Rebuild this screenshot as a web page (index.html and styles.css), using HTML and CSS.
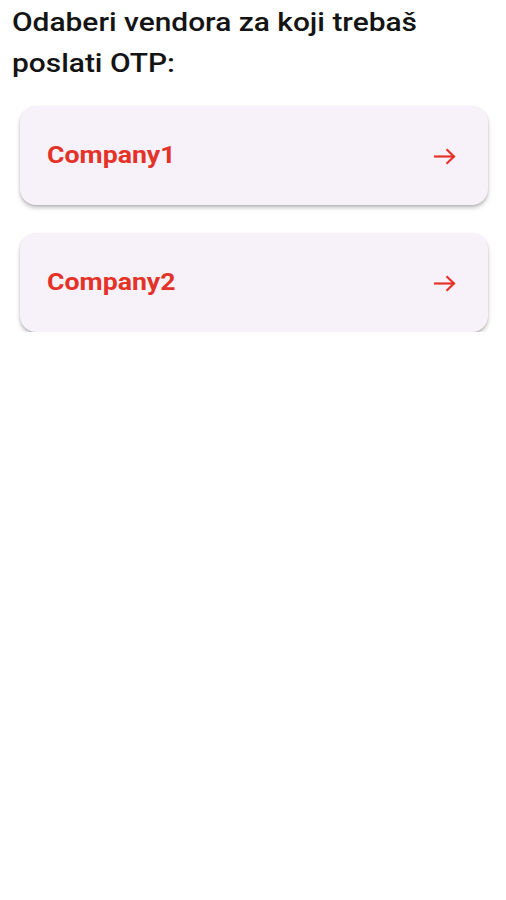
FILE: index.html
```html
<!DOCTYPE html>
<html lang="hr">
<head>
<meta charset="utf-8">
<link rel="stylesheet" href="styles.css">
</head>
<body>
<main class="page">
  <h1 class="title">Odaberi vendora za koji trebaš poslati OTP:</h1>
  <ul class="vendors">
    <li class="vendor">
      <span class="vendor-name">Company1</span>
      <svg class="arrow" width="23" height="17" viewBox="0 0 23 17" fill="none" stroke="#e53229" stroke-width="2.2" stroke-linecap="butt" stroke-linejoin="miter">
        <path d="M1 8.5H21"/>
        <path d="M13.5 1.3L21 8.5L13.5 15.7"/>
      </svg>
    </li>
    <li class="vendor">
      <span class="vendor-name">Company2</span>
      <svg class="arrow" width="23" height="17" viewBox="0 0 23 17" fill="none" stroke="#e53229" stroke-width="2.2" stroke-linecap="butt" stroke-linejoin="miter">
        <path d="M1 8.5H21"/>
        <path d="M13.5 1.3L21 8.5L13.5 15.7"/>
      </svg>
    </li>
  </ul>
</main>
</body>
</html>
```
FILE: styles.css
```css
html, body {
  margin: 0;
  padding: 0;
  background: #ffffff;
}
body {
  font-family: Roboto, "Liberation Sans", sans-serif;
  width: 506px;
}
.page {
  padding: 2px 18px 0 12px;
}
.title {
  margin: 0;
  width: 380px;
  font-size: 26px;
  font-weight: 500;
  line-height: 41px;
  color: #141414;
  transform: scaleX(1.15);
  transform-origin: left top;
}
.vendors {
  list-style: none;
  margin: 22px 0 0 8px;
  padding: 0;
  display: flex;
  flex-direction: column;
  gap: 28px;
}
.vendor {
  box-sizing: border-box;
  height: 99px;
  width: 468px;
  background: #f7f2f9;
  border-radius: 16px;
  box-shadow: 0 3px 4px rgba(0, 0, 0, 0.22), 0 1px 2px rgba(0, 0, 0, 0.12);
  display: flex;
  align-items: center;
  justify-content: space-between;
  padding: 0 32px 0 27px;
}
.vendor-name {
  display: inline-block;
  font-size: 23px;
  font-weight: 700;
  color: #e53229;
  transform: scaleX(1.16);
  transform-origin: left center;
}
.arrow {
  display: block;
  margin-top: 2px;
}
```
